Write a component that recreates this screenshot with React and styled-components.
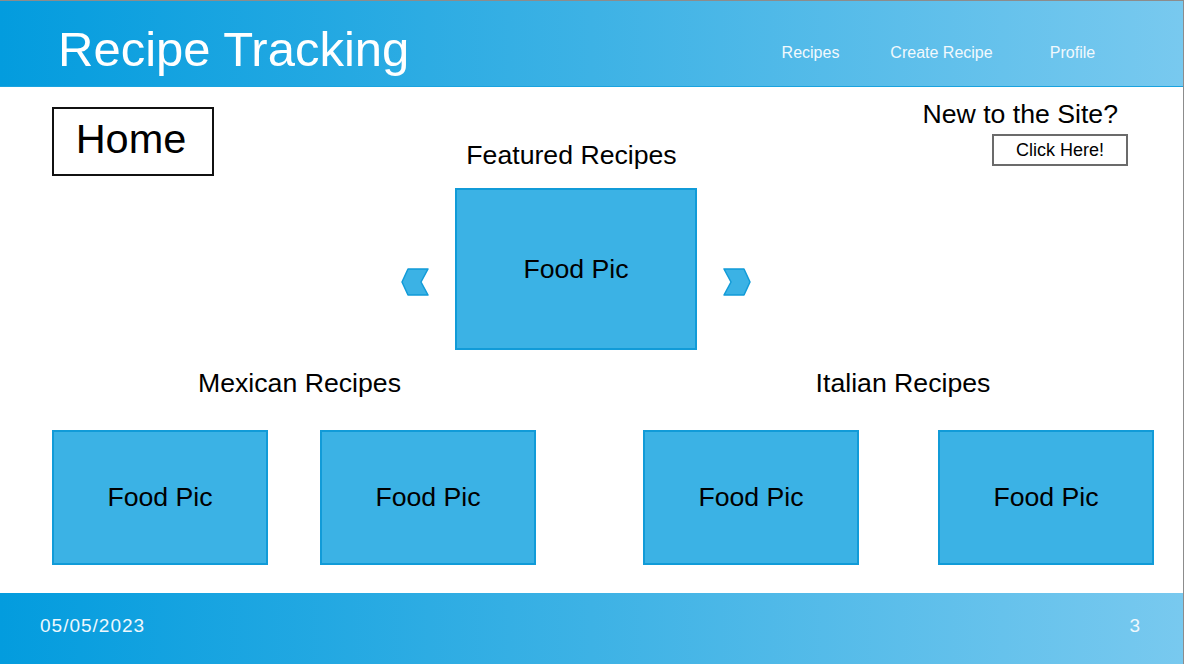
import React from "react";
import styled, { createGlobalStyle } from "styled-components";

const GlobalStyle = createGlobalStyle`
  html, body {
    margin: 0;
    padding: 0;
    background: #fff;
  }
  body {
    font-family: "Liberation Sans", Arial, sans-serif;
    color: #000;
  }
`;

const Slide = styled.div`
  width: 1184px;
  height: 664px;
  box-sizing: border-box;
  border-top: 1px solid #8c8c8c;
  border-right: 1px solid #8c8c8c;
  display: flex;
  flex-direction: column;
  overflow: hidden;
`;

const Bar = styled.div`
  background: linear-gradient(90deg, #039cde 0%, #3db2e5 50%, #78c9ef 100%);
  color: #fff;
  display: flex;
`;

const Header = styled(Bar)`
  height: 85px;
  border-bottom: 1px solid #1aa3df;
  align-items: flex-start;
  padding-left: 58px;
`;

const Title = styled.h1`
  margin: 24px 0 0;
  font-size: 49px;
  font-weight: normal;
  line-height: 48px;
  flex: 1;
`;

const Nav = styled.nav`
  display: flex;
  margin-top: 42px;
  margin-right: 45px;
`;

const NavItem = styled.a`
  width: 131px;
  text-align: center;
  font-size: 16px;
  line-height: 20px;
  color: #f2f9fd;
  text-decoration: none;
`;

const Main = styled.main`
  flex: 1;
  display: flex;
  flex-direction: column;
`;

const TopRow = styled.div`
  display: grid;
  grid-template-columns: 401px 350px 1fr;
`;

const HomeBox = styled.div`
  margin: 20px 0 0 52px;
  width: 162px;
  height: 69px;
  box-sizing: border-box;
  border: 2px solid #111;
  display: flex;
  align-items: center;
  justify-content: center;
  padding: 0 4px 7px 0;
  font-size: 41.5px;
  line-height: 41px;
`;

const Featured = styled.section`
  padding-top: 52px;
  display: flex;
  flex-direction: column;
`;

const Heading = styled.h2`
  margin: 0;
  font-size: 26.67px;
  font-weight: normal;
  line-height: 32px;
  text-align: center;
  padding-left: ${(p) => p.$shift || 0}px;
  padding-right: ${(p) => p.$pull || 0}px;
`;

const Carousel = styled.div`
  margin-top: 17px;
  display: flex;
  align-items: flex-start;
  gap: 26px;
`;

const Arrow = styled.svg`
  width: 28px;
  height: 28px;
  margin-top: 80px;
  flex-shrink: 0;
`;

const FoodPic = styled.div`
  width: ${(p) => p.$w}px;
  height: ${(p) => p.$h}px;
  box-sizing: border-box;
  background: #3bb2e5;
  border: 2px solid #119bd8;
  display: flex;
  align-items: center;
  justify-content: center;
  font-size: 26.67px;
  flex-shrink: 0;
`;

const NewSite = styled.div`
  padding: 11px 55px 0 0;
  display: flex;
  flex-direction: column;
  align-items: flex-end;
`;

const NewText = styled.div`
  font-size: 26.67px;
  line-height: 32px;
  margin-right: 10px;
`;

const ClickButton = styled.button`
  margin-top: 4px;
  width: 136px;
  height: 32px;
  box-sizing: border-box;
  border: 2px solid #6b6b6b;
  background: #fff;
  font-family: "Liberation Sans", Arial, sans-serif;
  font-size: 18px;
  color: #000;
  padding: 0;
`;

const BottomRow = styled.div`
  margin-top: 17px;
  padding-left: 52px;
  display: flex;
  gap: 107px;
`;

const Group = styled.section`
  display: flex;
  flex-direction: column;
`;

const Pics = styled.div`
  margin-top: 31px;
  display: flex;
  gap: ${(p) => p.$gap}px;
`;

const Footer = styled(Bar)`
  height: 71px;
  align-items: center;
  justify-content: space-between;
  padding: 0 43px 5px 40px;
  box-sizing: border-box;
  font-size: 19px;
  color: #eef8fd;
`;

const FooterText = styled.span`
  letter-spacing: ${(p) => p.$spacing || 0}px;
`;

const LeftChevron = () => (
  <Arrow viewBox="0 0 28 28">
    <polygon
      points="7,1 27,1 20,14 27,27 7,27 1,14"
      fill="#3bb2e5"
      stroke="#119bd8"
      strokeWidth="1.5"
      strokeLinejoin="round"
    />
  </Arrow>
);

const RightChevron = () => (
  <Arrow viewBox="0 0 28 28">
    <polygon
      points="1,1 21,1 27,14 21,27 1,27 8,14"
      fill="#3bb2e5"
      stroke="#119bd8"
      strokeWidth="1.5"
      strokeLinejoin="round"
    />
  </Arrow>
);

const categories = [
  { name: "Mexican Recipes", gap: 52, shift: 11 },
  { name: "Italian Recipes", gap: 79, shift: 9 },
];

export default function App() {
  return (
    <>
      <GlobalStyle />
      <Slide>
        <Header>
          <Title>Recipe Tracking</Title>
          <Nav>
            <NavItem>Recipes</NavItem>
            <NavItem>Create Recipe</NavItem>
            <NavItem>Profile</NavItem>
          </Nav>
        </Header>

        <Main>
          <TopRow>
            <div>
              <HomeBox>Home</HomeBox>
            </div>
            <Featured>
              <Heading $pull={9}>Featured Recipes</Heading>
              <Carousel>
                <LeftChevron />
                <FoodPic $w={242} $h={162}>Food Pic</FoodPic>
                <RightChevron />
              </Carousel>
            </Featured>
            <NewSite>
              <NewText>New to the Site?</NewText>
              <ClickButton>Click Here!</ClickButton>
            </NewSite>
          </TopRow>

          <BottomRow>
            {categories.map((c) => (
              <Group key={c.name}>
                <Heading $shift={c.shift}>{c.name}</Heading>
                <Pics $gap={c.gap}>
                  <FoodPic $w={216} $h={135}>Food Pic</FoodPic>
                  <FoodPic $w={216} $h={135}>Food Pic</FoodPic>
                </Pics>
              </Group>
            ))}
          </BottomRow>
        </Main>

        <Footer>
          <FooterText $spacing={1}>05/05/2023</FooterText>
          <FooterText>3</FooterText>
        </Footer>
      </Slide>
    </>
  );
}
